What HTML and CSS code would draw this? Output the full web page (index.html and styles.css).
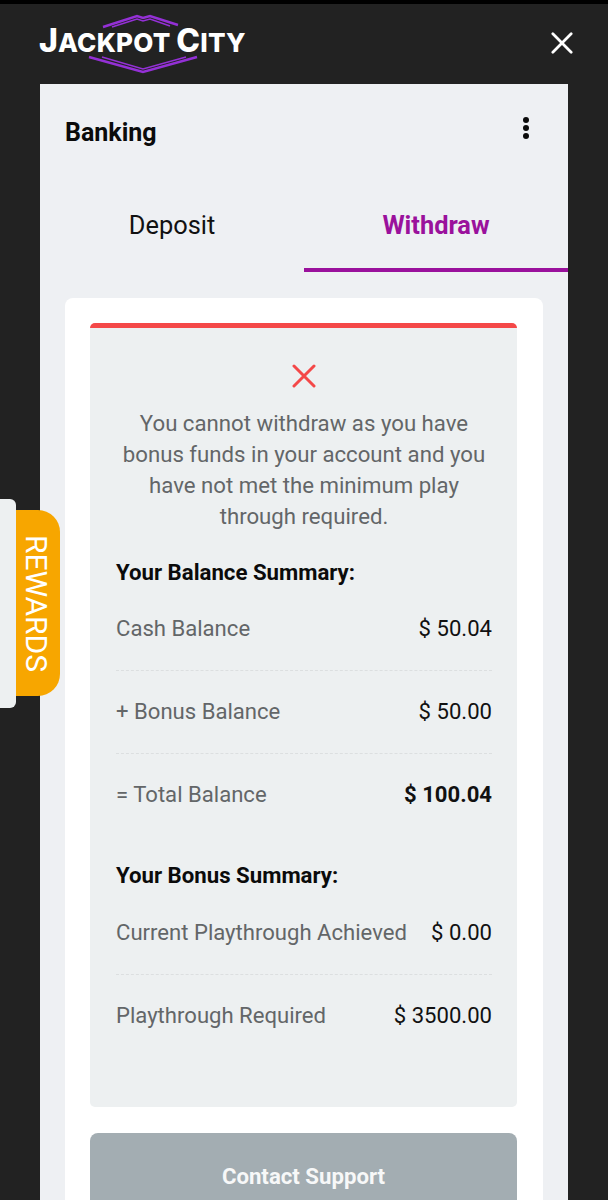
FILE: index.html
```html
<!DOCTYPE html>
<html lang="en">
<head>
    <meta charset="UTF-8">
    <title>Banking</title>
    <link rel="stylesheet" href="styles.css">
</head>
<body>
    <div class="statusBar"></div>

    <header class="topBar">
        <div class="logo">
            <svg class="logoMark" viewBox="0 0 205 60">
                <path d="M63 13 L97 2 L103 4 L110 2 L138 11" fill="none" stroke="#9430d6" stroke-width="2.5"/>
                <path d="M72 13 L97 5 L103 7 L110 5 L130 12" fill="none" stroke="#9430d6" stroke-width="1.5"/>
                <path d="M49 43 L103 58 L157 43" fill="none" stroke="#9430d6" stroke-width="2.5"/>
                <path d="M62 43 L103 55 L146 43" fill="none" stroke="#9430d6" stroke-width="1.5"/>
            </svg>
            <div class="logoText"><span class="bigLetter">J</span>ACKPOT <span class="bigLetter">C</span>ITY</div>
        </div>
        <svg class="closeIcon" viewBox="0 0 24 24">
            <path d="M2 2 L22 22 M22 2 L2 22" stroke="#fff" stroke-width="3" stroke-linecap="round"/>
        </svg>
    </header>

    <main class="panel">
        <div class="panelHead">
            <h1>Banking</h1>
            <div class="dots"><span></span><span></span><span></span></div>
        </div>

        <div class="tabs">
            <div class="tab">Deposit</div>
            <div class="tab active">Withdraw</div>
        </div>

        <div class="card">
            <div class="notice">
                <svg class="errorIcon" viewBox="0 0 24 24">
                    <path d="M2 2 L22 22 M22 2 L2 22" stroke="#f44848" stroke-width="3" stroke-linecap="round"/>
                </svg>
                <p class="message">You cannot withdraw as you have bonus funds in your account and you have not met the minimum play through required.</p>

                <h2>Your Balance Summary:</h2>
                <div class="row"><span>Cash Balance</span><span class="amount">$ 50.04</span></div>
                <div class="row"><span>+ Bonus Balance</span><span class="amount">$ 50.00</span></div>
                <div class="row"><span>= Total Balance</span><span class="amount total">$ 100.04</span></div>

                <h2 class="second">Your Bonus Summary:</h2>
                <div class="row"><span>Current Playthrough Achieved</span><span class="amount">$ 0.00</span></div>
                <div class="row"><span>Playthrough Required</span><span class="amount">$ 3500.00</span></div>
            </div>
            <button class="support">Contact Support</button>
        </div>
    </main>

    <div class="rewards">
        <div class="rewardsEdge"></div>
        <div class="rewardsTab">REWARDS</div>
    </div>
</body>
</html>
```

FILE: styles.css
```css
html, body {
    height: 1200px;
    overflow: hidden;
}

body {
    margin: 0;
    background-color: #222222;
    font-family: Roboto, Arial, sans-serif;
    position: relative;
}

.statusBar {
    height: 4px;
    background-color: #000;
}

.topBar {
    height: 80px;
    display: flex;
    align-items: center;
    justify-content: space-between;
    padding: 0 35px 0 40px;
}

.logo {
    position: relative;
    width: 205px;
    height: 60px;
}

.logoMark {
    position: absolute;
    top: 0;
    left: 0;
    width: 205px;
    height: 60px;
}

.logoText {
    position: absolute;
    top: 10px;
    left: -1px;
    color: #fff;
    font-family: Inter, Arial, sans-serif;
    font-weight: 800;
    font-size: 26px;
    line-height: 34px;
    letter-spacing: 0.2px;
    white-space: nowrap;
}

.bigLetter {
    font-size: 32px;
}

.closeIcon {
    width: 22px;
    height: 22px;
    margin-top: -3px;
}

.panel {
    margin: 0 40px;
    background-color: #eef0f3;
    height: 1116px;
}

.panelHead {
    height: 96px;
    display: flex;
    align-items: center;
    justify-content: space-between;
    padding: 0 39px 0 25px;
}

h1 {
    margin: 0;
    font-size: 25px;
    font-weight: 700;
    color: #0b0b0b;
}

.dots {
    display: flex;
    flex-direction: column;
    gap: 2px;
    margin-top: -8px;
}

.dots span {
    width: 6px;
    height: 6px;
    border-radius: 50%;
    background-color: #0b0b0b;
}

.tabs {
    display: flex;
    height: 92px;
}

.tab {
    flex: 1;
    display: flex;
    align-items: center;
    justify-content: center;
    font-size: 25.4px;
    color: #111;
    padding-bottom: 2px;
    box-sizing: border-box;
}

.tab.active {
    color: #9a119c;
    font-weight: 700;
    border-bottom: 4px solid #9a119c;
    padding: 2px 0 0;
}

.card {
    margin: 26px 25px 0;
    padding: 25px 26px 25px 25px;
    background-color: #fff;
    border-radius: 8px;
}

.notice {
    background-color: #edf0f1;
    border-top: 5px solid #f44848;
    border-radius: 5px;
    padding: 36px 25px 0 26px;
    height: 784px;
    box-sizing: border-box;
    text-align: center;
}

.errorIcon {
    display: block;
    width: 24px;
    height: 24px;
    margin: 0 auto;
}

.message {
    margin: 20px 0 0;
    font-size: 22.2px;
    line-height: 31px;
    color: #636668;
}

h2 {
    margin: 24.5px 0 0;
    font-size: 22.2px;
    line-height: 31px;
    font-weight: 700;
    color: #0b0b0b;
    text-align: left;
}

h2.second {
    margin: 24.5px 0 1px;
}

.row {
    display: flex;
    justify-content: space-between;
    font-size: 22.1px;
    line-height: 31px;
    color: #636668;
    padding: 25px 0 26px;
    border-bottom: 1px dashed #dcdfe0;
    white-space: nowrap;
}

.row:has(+ h2),
.row:last-child {
    border-bottom: none;
}

.amount {
    color: #111;
}

.amount.total {
    font-weight: 700;
}

.support {
    display: block;
    width: 100%;
    height: 88px;
    margin-top: 26px;
    padding-bottom: 4px;
    border: none;
    border-radius: 8px;
    background-color: #a3adb2;
    color: #f7f8f8;
    font-family: Roboto, Arial, sans-serif;
    font-size: 22.2px;
    font-weight: 700;
}

.rewards {
    position: absolute;
    top: 499px;
    left: 0;
    display: flex;
    align-items: center;
    height: 209px;
}

.rewardsEdge {
    width: 16px;
    height: 209px;
    background-color: #edf0f1;
    border-radius: 0 6px 6px 0;
}

.rewardsTab {
    width: 44px;
    height: 186px;
    margin-top: -2px;
    background-color: #f7a600;
    border-radius: 0 22px 22px 0;
    color: #fff;
    font-size: 30px;
    writing-mode: vertical-rl;
    display: flex;
    align-items: center;
    justify-content: center;
    padding: 2px 3px 0 0;
    box-sizing: border-box;
}
```
